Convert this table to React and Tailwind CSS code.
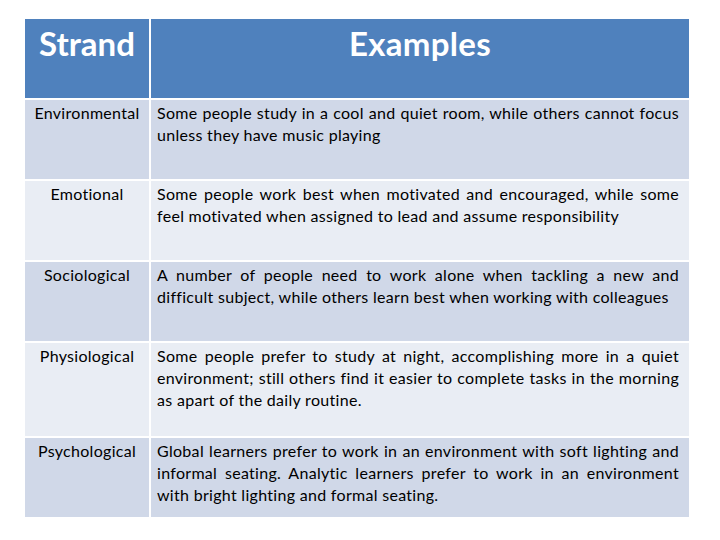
import React from "react";

const rows = [
  {
    strand: "Environmental",
    text: "Some people study in a cool and quiet room, while others cannot focus unless they have music playing",
    h: "h-[79px]",
  },
  {
    strand: "Emotional",
    text: "Some people work best when motivated and encouraged, while some feel motivated when assigned to lead and assume responsibility",
    h: "h-[79px]",
  },
  {
    strand: "Sociological",
    text: "A number of people need to work alone when tackling a new and difficult subject, while others learn best when working with colleagues",
    h: "h-[79px]",
  },
  {
    strand: "Physiological",
    text: "Some people prefer to study at night, accomplishing more in a quiet environment; still others find it easier to complete tasks in the morning as apart of the daily routine.",
    h: "h-[93px]",
  },
  {
    strand: "Psychological",
    text: "Global learners prefer to work in an environment with soft lighting and informal seating. Analytic learners prefer to work in an environment with bright lighting and formal seating.",
    h: "h-[79px]",
  },
];

export default function App() {
  return (
    <div className="w-[720px] h-[540px] bg-white pt-[19px] pl-[25px] font-['Lato',sans-serif] text-black">
      <div className="grid grid-cols-[124px_538px] gap-[2px]">
        {/* header */}
        <div className="h-[79px] bg-[#4f81bd] text-white font-bold text-[33px] leading-[40px] text-center pt-[4px]">
          Strand
        </div>
        <div className="h-[79px] bg-[#4f81bd] text-white font-bold text-[33px] leading-[40px] text-center pt-[4px] tracking-[0.3px]">
          Examples
        </div>

        {rows.map((r, i) => {
          const bg = i % 2 === 0 ? "bg-[#d0d8e8]" : "bg-[#e9edf4]";
          return (
            <React.Fragment key={r.strand}>
              <div className={`${r.h} ${bg} text-center text-[16px] leading-[22px] pt-[2px] tracking-[0.3px]`}>
                {r.strand}
              </div>
              <div className={`${r.h} ${bg} text-[16px] leading-[22px] pt-[2px] pl-[6px] pr-[10px] text-justify tracking-[0.3px]`}>
                {r.text}
              </div>
            </React.Fragment>
          );
        })}
      </div>
    </div>
  );
}
